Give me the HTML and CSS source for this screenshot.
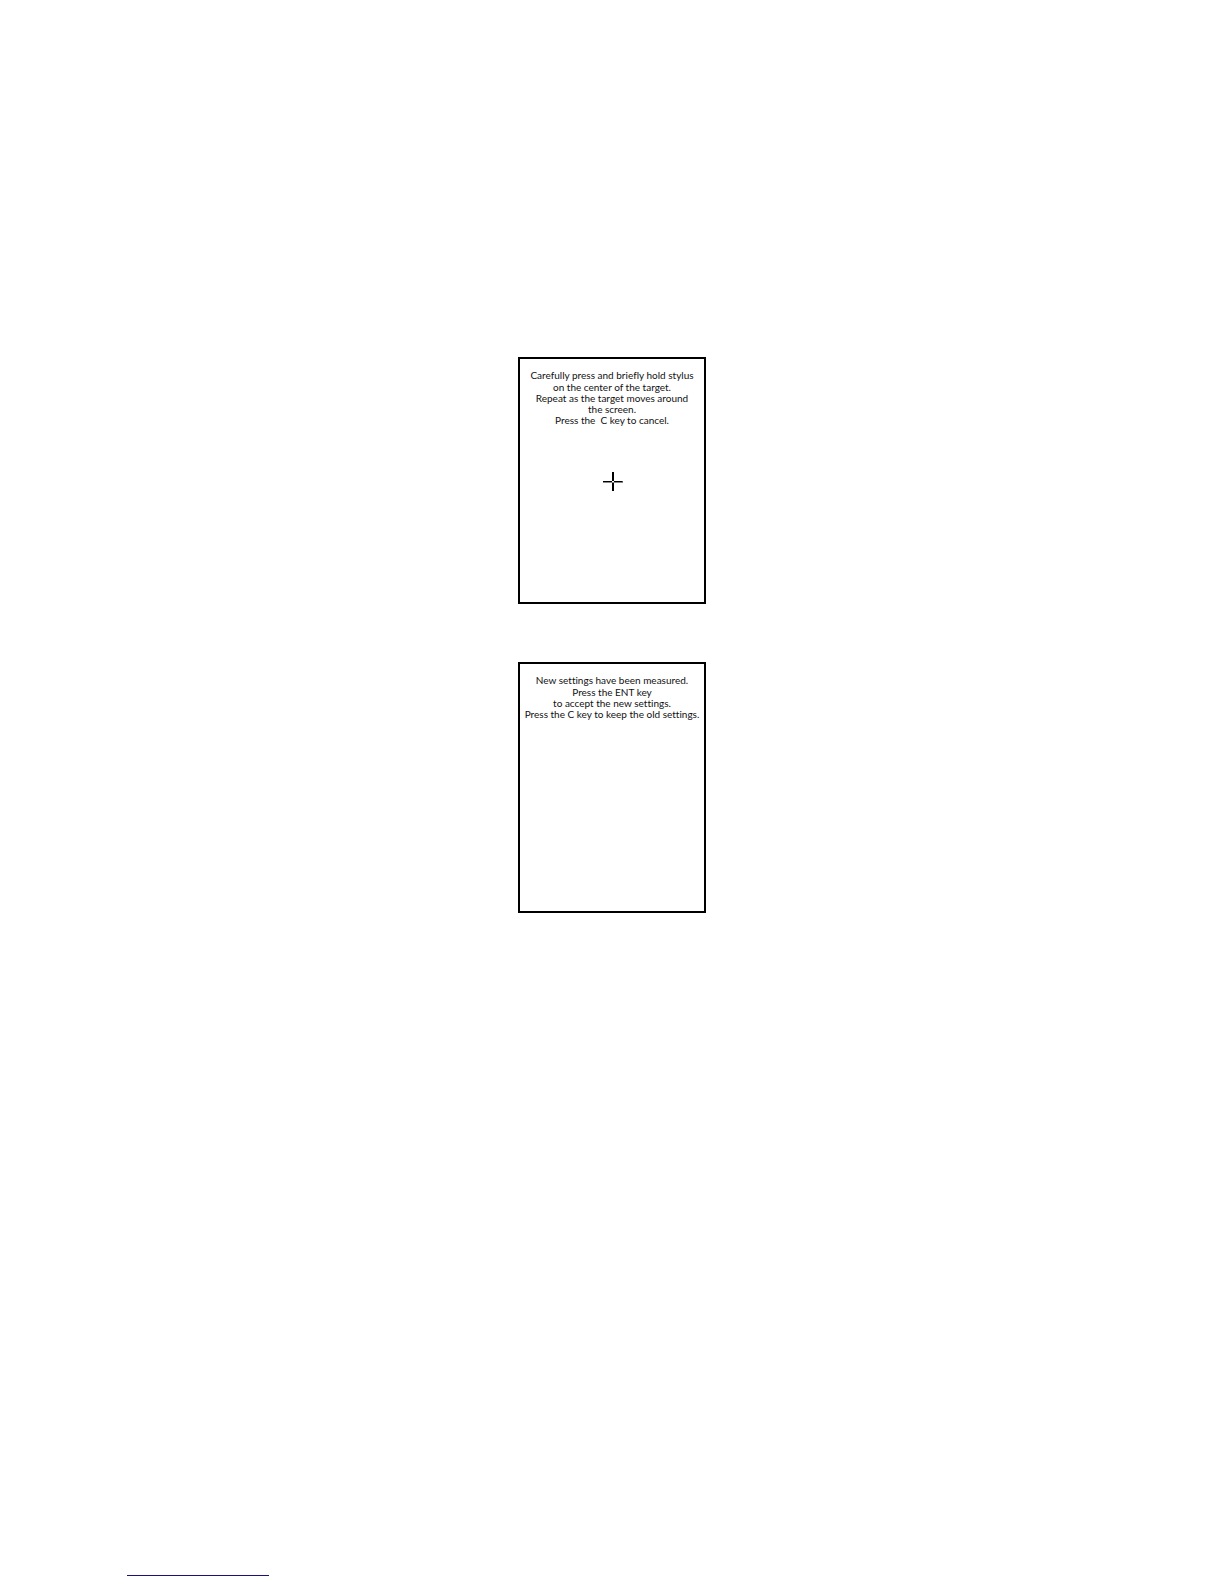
FILE: index.html
```html
<!DOCTYPE html>
<html lang="en">
<head>
<meta charset="utf-8">
<title>Stylus calibration</title>
<link rel="stylesheet" href="styles.css">
</head>
<body>
<main class="screens">
<section class="screen target-screen">
<p class="message">Carefully press and briefly hold stylus<br>on the center of the target.</p>
<p class="message hint">Repeat as the target moves around<br>the screen.<br>Press the&nbsp; C key to cancel.</p>
<svg class="target" viewBox="0 0 22 20" aria-hidden="true" shape-rendering="crispEdges">
<path d="M11 0h2v9h-2zM11 11h2v8h-2zM2 9h9v1H2zM13 9h8v1h-8z" fill="#000"/>
<path d="M2 10h20v1H2z" fill="#888"/>
<path d="M21 9h1v1h-1z" fill="#555"/>
</svg>
</section>
<section class="screen result-screen">
<p class="message">New settings have been measured.<br>Press the ENT key</p>
<p class="message hint">to accept the new settings.<br>Press the C key to keep the old settings.</p>
</section>
</main>
<footer class="footer"><hr class="rule"></footer>
</body>
</html>
```
FILE: styles.css
```css
* {
  box-sizing: border-box;
}

body {
  margin: 0;
  min-height: 100vh;
  display: flex;
  flex-direction: column;
  background: #fff;
  color: #111;
  font-family: Lato, "Noto Sans", sans-serif;
  font-size: 10px;
  font-variant-ligatures: none;
}

.screens {
  flex: 1;
  display: flex;
  flex-direction: column;
  align-items: center;
  gap: 58px;
  padding-top: 357px;
}

.screen {
  width: 188px;
  padding-top: 10px;
  border: 2px solid #000;
  display: flex;
  flex-direction: column;
  align-items: center;
}

.target-screen {
  min-height: 247px;
}

.result-screen {
  min-height: 251px;
}

.message {
  margin: 0;
  line-height: 12px;
  text-align: center;
  white-space: nowrap;
}

.hint {
  line-height: 11px;
}

.target {
  width: 22px;
  height: 20px;
  margin-top: 46px;
}

.footer {
  padding: 0 127px 8px;
}

.rule {
  width: 142px;
  height: 1px;
  margin: 0;
  border: 0;
  background: #14147c;
}
```
